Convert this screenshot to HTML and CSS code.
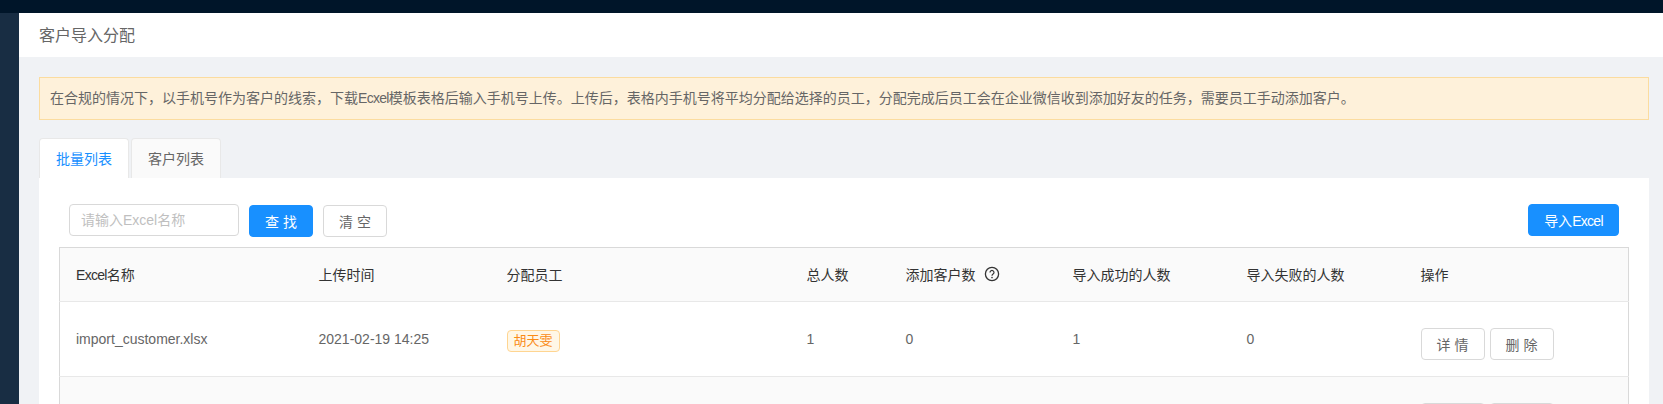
FILE: index.html
```html
<!DOCTYPE html>
<html lang="zh-CN">
<head>
<meta charset="utf-8">
<title>客户导入分配</title>
<link rel="stylesheet" href="styles.css">
</head>
<body>
<div class="topbar"></div>
<div class="shell">
  <aside class="sidebar"></aside>
  <main class="main">
    <header class="page-title">客户导入分配</header>
    <div class="content">
      <div class="alert">在合规的情况下，以手机号作为客户的线索，下载<span class="latin">Ecxel</span>模板表格后输入手机号上传。上传后，表格内手机号将平均分配给选择的员工，分配完成后员工会在企业微信收到添加好友的任务，需要员工手动添加客户。</div>
      <div class="tabs">
        <div class="tab tab-active">批量列表</div>
        <div class="tab">客户列表</div>
      </div>
      <section class="card">
        <div class="toolbar">
          <input class="search" type="text" placeholder="请输入Excel名称">
          <button class="btn btn-primary btn-wide">查 找</button>
          <button class="btn btn-wide">清 空</button>
          <button class="btn btn-primary btn-import">导入<span class="latin">Excel</span></button>
        </div>
        <table class="table">
          <colgroup>
            <col class="c1"><col class="c2"><col class="c3"><col class="c4"><col class="c5"><col class="c6"><col class="c7"><col>
          </colgroup>
          <thead>
            <tr>
              <th><span class="latin">Excel</span>名称</th>
              <th>上传时间</th>
              <th>分配员工</th>
              <th>总人数</th>
              <th>添加客户数<svg class="help" viewBox="0 0 16 16" width="16" height="16" aria-hidden="true"><circle cx="8" cy="8" r="6.6" fill="none" stroke="#333" stroke-width="1.3"/><path d="M6 6.4a2 2 0 1 1 3.1 1.7c-.7.5-1.1.8-1.1 1.6" fill="none" stroke="#333" stroke-width="1.2"/><circle cx="8" cy="11.6" r=".8" fill="#333"/></svg></th>
              <th>导入成功的人数</th>
              <th>导入失败的人数</th>
              <th>操作</th>
            </tr>
          </thead>
          <tbody>
            <tr>
              <td>import_customer.xlsx</td>
              <td>2021-02-19 14:25</td>
              <td><span class="tag">胡天雯</span></td>
              <td>1</td>
              <td>0</td>
              <td>1</td>
              <td>0</td>
              <td><div class="actions"><button class="btn btn-sm">详 情</button><button class="btn btn-sm">删 除</button></div></td>
            </tr>
            <tr class="alt">
              <td></td><td></td><td></td><td></td><td></td><td></td><td></td>
              <td><div class="actions"><button class="btn btn-sm"></button><button class="btn btn-sm"></button></div></td>
            </tr>
          </tbody>
        </table>
      </section>
    </div>
  </main>
</div>
</body>
</html>
```
FILE: styles.css
```css
* { box-sizing: border-box; }
html, body { margin: 0; height: 404px; overflow: hidden; }
body {
  font-family: "Liberation Sans", "Noto Sans CJK SC", sans-serif;
  font-size: 14px;
  color: #666;
  background: #f0f2f5;
}
.latin { letter-spacing: -0.7px; }
.topbar { height: 13px; background: #001529; }
.shell { display: flex; height: 391px; }
.sidebar { width: 19px; flex: none; background: #182d43; }
.main { flex: 1; min-width: 0; }
.page-title {
  height: 44px;
  padding: 1px 0 0 20px;
  background: #fff;
  font-size: 16px;
  line-height: 43px;
  color: #666;
}
.content { padding: 20px 14px 0 20px; }
.alert {
  height: 43px;
  padding: 0 10px;
  border: 1px solid #fbdc9f;
  background: #fef1da;
  line-height: 41px;
  color: #666;
}
.tabs { display: flex; gap: 2px; margin-top: 18px; height: 40px; }
.tab {
  width: 90px;
  height: 40px;
  border: 1px solid #e8e8e8;
  border-bottom: 0;
  border-radius: 4px 4px 0 0;
  background: #fafafa;
  text-align: center;
  line-height: 40px;
}
.tab-active { background: #fff; color: #1890ff; }
.card { background: #fff; padding: 26px 20px 0; }
.toolbar { display: flex; align-items: flex-start; margin: 0 0 10px; padding: 0 10px; }
.search {
  width: 170px;
  height: 32px;
  padding: 0 11px;
  border: 1px solid #d9d9d9;
  border-radius: 4px;
  font: inherit;
  color: #666;
  outline: 0;
}
.search::placeholder { color: #bfbfbf; }
.btn {
  height: 32px;
  border: 1px solid #d9d9d9;
  border-radius: 4px;
  background: #fff;
  font: inherit;
  color: #666;
  padding: 0;
}
.btn-primary { background: #1890ff; border-color: #1890ff; color: #fff; }
.btn-wide { width: 64px; margin: 1px 0 0 10px; }
.btn-import { width: 91px; margin-left: auto; }
.table { width: 100%; border-collapse: collapse; table-layout: fixed; border: 1px solid #d9d9d9; }
.c1 { width: 243px; }
.c2 { width: 188px; }
.c3 { width: 300px; }
.c4 { width: 99px; }
.c5 { width: 167px; }
.c6 { width: 174px; }
.c7 { width: 174px; }
th, td { padding: 0 0 0 16px; text-align: left; border-bottom: 1px solid #e8e8e8; }
th { height: 54px; padding-bottom: 2px; background: #fafafa; font-weight: 400; color: #333; white-space: nowrap; }
td { height: 75px; }
.alt td { background: #fafafa; }
.help { margin-left: 8px; vertical-align: -2px; }
.tag {
  display: inline-block;
  height: 22px;
  margin-top: 4px;
  padding: 0 6px;
  border: 1px solid #ffd591;
  border-radius: 4px;
  background: #fff7e6;
  color: #fa8c16;
  font-size: 13px;
  line-height: 20px;
}
.actions { display: flex; gap: 5px; margin-top: 9px; }
.btn-sm { width: 64px; }
```
